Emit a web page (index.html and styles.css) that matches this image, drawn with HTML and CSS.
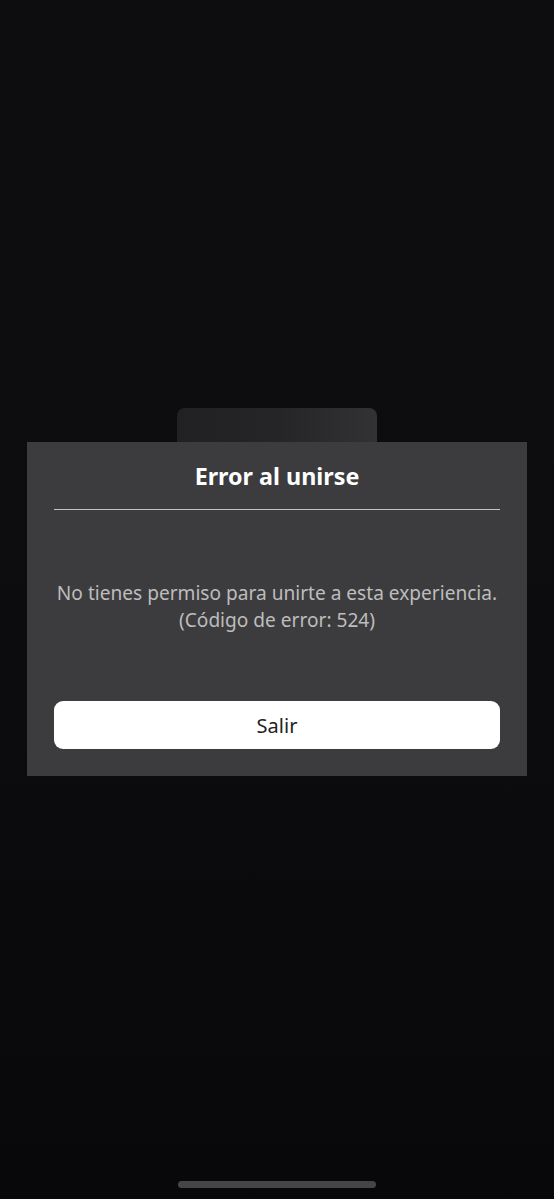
FILE: index.html
```html
<!DOCTYPE html>
<html lang="es">
<head>
    <meta charset="UTF-8">
    <meta name="viewport" content="width=device-width, initial-scale=1.0">
    <title>Error al unirse</title>
    <link rel="stylesheet" href="styles.css">
</head>
<body>
    <div class="screen">
        <div class="dialog-wrap">
            <div class="tab"></div>
            <div class="dialog">
                <h1>Error al unirse</h1>
                <hr class="divider">
                <p class="message">No tienes permiso para unirte a esta experiencia.<br>(Código de error: 524)</p>
                <button class="leave">Salir</button>
            </div>
        </div>
        <div class="home-bar"></div>
    </div>
</body>
</html>
```

FILE: styles.css
```css
* { margin: 0; padding: 0; box-sizing: border-box; font-family: "Noto Sans", "Open Sans", sans-serif; }
body { background: linear-gradient(180deg, #0d0d10 0%, #0c0c0e 60%, #08080b 100%); }
.screen { height: 1199px; display: flex; flex-direction: column; align-items: center; padding-top: 408px; }

/* Dialog */
.dialog-wrap { width: 500px; display: flex; flex-direction: column; align-items: center; }
.tab { width: 200px; height: 34px; border-radius: 8px 8px 0 0; background: linear-gradient(90deg, #212123 0%, #252527 50%, #323234 100%); }
.dialog { width: 500px; background-color: #3c3c3e; padding: 18px 27px 27px; text-align: center; }
h1 { color: #fff; font-size: 23.3px; font-weight: 700; line-height: 32px; }
.divider { border: none; height: 1px; background-color: #c4c4c4; margin-top: 17px; }
.message { color: #bdbdbd; font-size: 19.1px; line-height: 27px; margin-top: 70px; }
.leave { display: block; width: 100%; height: 48px; margin-top: 67px; background-color: #fff; color: #222; border: none; border-radius: 9px; font-size: 20px; cursor: pointer; }

/* Barra inferior */
.home-bar { margin-top: auto; margin-bottom: 11px; width: 198px; height: 7px; border-radius: 4px; background-color: #454545; }
```
